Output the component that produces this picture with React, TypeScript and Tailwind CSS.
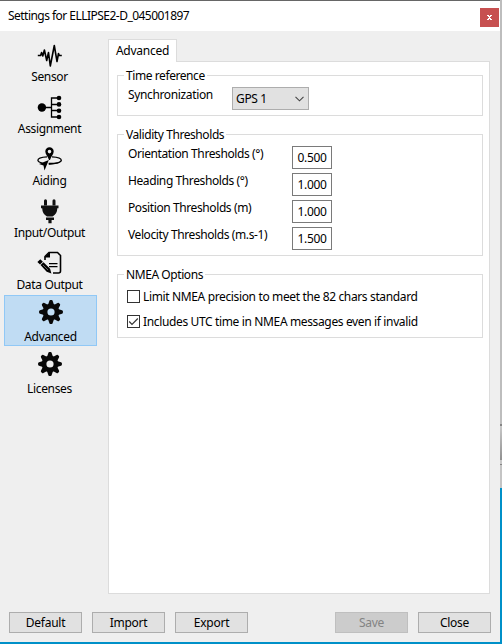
import type { ReactNode } from "react";

function SensorIcon() {
  return (
    <svg width="26" height="26" viewBox="0 0 26 26" fill="none" stroke="#000" strokeWidth="1.6" strokeLinejoin="round">
      <path d="M.8 12.500h2.800l1-3 1.200 3.500L7.400 7l2.300 10.500 1.800-8 1.800 13.500 4-20.500 2.700 16 1.500-8 .8 2h2.500" />
    </svg>
  );
}

function AssignmentIcon() {
  return (
    <svg width="26" height="26" viewBox="0 0 26 26" fill="#000">
      <circle cx="4.900" cy="12.500" r="4.200" />
      <path d="M5 12.500h9.500M22 3h-7.500v19H22M14.500 9.500H22M14.500 15.500H22" fill="none" stroke="#000" strokeWidth="1.300" />
      <circle cx="22" cy="3" r="2.300" />
      <circle cx="22" cy="9.400" r="2.300" />
      <circle cx="22" cy="15.700" r="2.300" />
      <circle cx="22" cy="22" r="2.300" />
    </svg>
  );
}

function AidingIcon() {
  return (
    <svg width="26" height="26" viewBox="0 0 26 26" fill="#000">
      <path d="M10 9.900C4.500 10.200.9 11.500.9 13.300c0 1.300 1.800 2.200 4.600 2.800M15 9.900c5.500.3 9.300 1.600 9.300 3.400 0 2-5.200 3.700-12.300 3.700" fill="none" stroke="#000" strokeWidth="1.300" />
      <path d="M24.500 13.300c0 2.300-5.200 4.300-13 4.200l.2-1.700c7 .2 12.300-.6 12.800-2.500z" />
      <path fillRule="evenodd" d="M12.500.3a4.200 4.200 0 0 1 4.200 4.200c0 2.500-2.600 5-3.700 8.500h-1C10.900 9.500 8.300 7 8.300 4.500A4.200 4.200 0 0 1 12.500.3zm0 2.500a1.800 1.800 0 1 0 0 3.600 1.800 1.800 0 0 0 0-3.600z" />
      <path d="M11.800 13 2 17l4.500 1.500 1 5z" />
    </svg>
  );
}

function PlugIcon() {
  return (
    <svg width="26" height="26" viewBox="0 0 26 26" fill="#111">
      <path d="M7 1.700a1.500 1.500 0 0 1 3 0V6.500H7zM15.500 1.700a1.500 1.500 0 0 1 3 0V6.500h-3z" />
      <path d="M4 6.500h17.500v2.800h-1.200c0 4-1.800 6.700-4.800 8.200H10c-3-1.500-4.800-4.200-4.800-8.200H4zM9 18.500h8v2.600h-2.400v3.200h-3.200v-3.200H9z" />
    </svg>
  );
}

function DataOutputIcon() {
  return (
    <svg width="26" height="26" viewBox="0 0 26 26">
      <path d="M8 9V5.500L12 1.500h8.500l3 3v15.500q0 2-2 2H16" fill="none" stroke="#000" strokeWidth="1.600" />
      <path d="m7.500 6.500 5.500-5.500v5.500z" />
      <path d="M12 12.600h8.500M12 15.600h8.500" stroke="#000" strokeWidth="1.200" />
      <path d="m.4 11 2.900-2.700 2.600 2.400-2.900 2.800zM3.500 14.100l3-2.900 6.600 6.500 1.300 4.800-4.700-1.800z" />
      <path d="m6 14 5 5" stroke="#efefef" strokeWidth=".4" />
    </svg>
  );
}

function GearIcon() {
  return (
    <svg width="26" height="26" viewBox="0 0 26 26" fill="#080808">
      {[0, 45, 90, 135, 180, 225, 270, 315].map((angle) => (
        <path key={angle} d="M10 6l1.300-4q.3-.9 1-.9h1.400q.7 0 1 .9L16 6z" transform={`rotate(${angle} 13 13)`} />
      ))}
      <path fillRule="evenodd" d="M13 4.700a8.300 8.300 0 1 0 0 16.600 8.300 8.300 0 0 0 0-16.600zm0 4.700a3.600 3.600 0 1 1 0 7.200 3.600 3.600 0 0 1 0-7.200z" />
    </svg>
  );
}

const items = [
  { label: "Sensor", icon: <SensorIcon />, offset: "pt-[7px]" },
  { label: "Assignment", icon: <AssignmentIcon />, offset: "pt-[7px]" },
  { label: "Aiding", icon: <AidingIcon />, offset: "pt-[7px]" },
  { label: "Input/Output", icon: <PlugIcon />, offset: "pt-[7px]" },
  { label: "Data Output", icon: <DataOutputIcon />, offset: "pt-[7px]" },
  { label: "Advanced", icon: <GearIcon />, offset: "pt-[3px]", selected: true },
  { label: "Licenses", icon: <GearIcon />, offset: "pt-[3px]" },
];

const thresholds = [
  { label: "Orientation Thresholds (°)", value: "0.500" },
  { label: "Heading Thresholds (°)", value: "1.000" },
  { label: "Position Thresholds (m)", value: "1.000" },
  { label: "Velocity Thresholds (m.s-1)", value: "1.500" },
];

function Group({ title, className, children }: { title: string; className: string; children: ReactNode }) {
  return (
    <fieldset className={`w-[366px] border border-[#dcdcdc] ${className}`}>
      <legend className="ml-[6px] h-[15px] px-[2px] leading-[16px] tracking-[-0.42px]">{title}</legend>
      {children}
    </fieldset>
  );
}

function Check({ checked, children }: { checked?: boolean; children: ReactNode }) {
  return (
    <div className="flex h-[25px] items-center gap-[3px] pl-[9px]">
      <span className="flex h-[13px] w-[13px] items-center justify-center border border-[#333]">
        {checked && (
          <svg width="11" height="11" viewBox="0 0 11 11" fill="none" stroke="#333" strokeWidth="1.200">
            <path d="m1.200 5.500 2.800 2.800 5.800-5.800" />
          </svg>
        )}
      </span>
      <span>{children}</span>
    </div>
  );
}

function Button({ children, disabled }: { children: ReactNode; disabled?: boolean }) {
  return (
    <button
      disabled={disabled}
      className={`h-[21px] w-[73px] border text-center leading-[19px] tracking-[-0.25px] ${
        disabled ? "border-[#bfbfbf] bg-[#cccccc] text-[#838383]" : "border-[#adadad] bg-[#e1e1e1]"
      }`}
    >
      {children}
    </button>
  );
}

export default function App() {
  return (
    <div className="flex h-[644px] w-[502px] flex-col overflow-hidden bg-[#0090c8] font-['Noto_Sans','Open_Sans',sans-serif] text-[12px] leading-[16px] tracking-[-0.36px] whitespace-nowrap text-black">
      <div className="flex h-[642px]">
        <div className="flex w-[500px] flex-col border-t border-[#666] bg-[#efefef]">
          <header className="flex h-[30px] items-start justify-between bg-white pr-px pl-[8px]">
            <span className="pt-[7px] tracking-[-0.53px]">Settings for ELLIPSE2-D_045001897</span>
            <button className="mt-[7px] flex h-[19px] w-[19px] items-center justify-center bg-[#c75050]">
              <svg width="5" height="5" viewBox="0 0 5 5" fill="#fff" shapeRendering="crispEdges">
                <path d="M0 0h2v1H0zM3 0h2v1H3zM1 1h3v1H1zM2 2h1v1H2zM1 3h3v1H1zM0 4h2v1H0zM3 4h2v1H3z" />
              </svg>
            </button>
          </header>
          <div className="flex h-[563px]">
            <nav className="w-[108px] pt-[4px] pl-[4px]">
              {items.map((item) => (
                <div
                  key={item.label}
                  className={`mb-px flex h-[51px] w-[93px] flex-col items-center border ${
                    item.selected ? "border-[#90c8f6] bg-[#c0dcf3]" : "border-transparent pr-[2px]"
                  }`}
                >
                  <div className={`h-[33px] ${item.offset}`}>{item.icon}</div>
                  <span className="tracking-[-0.35px]">{item.label}</span>
                </div>
              ))}
            </nav>
            <main className="flex flex-col pt-[8px]">
              <div className="z-10 h-[23px] w-[69px] border border-b-0 border-[#dcdcdc] bg-white text-center leading-[21px] tracking-[-0.25px]">Advanced</div>
              <section className="-mt-px h-[533px] w-[382px] border border-[#dcdcdc] bg-white pt-[6px] pl-[8px]">
                <Group title="Time reference" className="h-[48px]">
                  <div className="flex pl-[10px]">
                    <span className="mt-[4px] w-[104px]">Synchronization</span>
                    <div className="mt-[4px] flex h-[23px] w-[77px] items-center justify-between border border-[#adadad] bg-[#e1e1e1] pr-[4px] pl-[3px]">
                      <span>GPS 1</span>
                      <svg width="9" height="6" viewBox="0 0 9 6" fill="none" stroke="#444" strokeWidth="1.100">
                        <path d="m.5.8 4 4 4-4" />
                      </svg>
                    </div>
                  </div>
                </Group>
                <Group title="Validity Thresholds" className="mt-[11px] h-[129px]">
                  <div className="flex flex-col gap-[4px] pt-[4px] pl-[10px]">
                    {thresholds.map((row) => (
                      <div key={row.label} className="flex h-[23px]">
                        <span className="w-[164px] tracking-[-0.4px]">{row.label}</span>
                        <span className="h-[23px] w-[40px] border border-[#7a7a7a] text-center leading-[21px]">{row.value}</span>
                      </div>
                    ))}
                  </div>
                </Group>
                <Group title="NMEA Options" className="mt-[11px] h-[71px]">
                  <div className="pt-[2px]">
                    <Check>Limit NMEA precision to meet the 82 chars standard</Check>
                    <Check checked>Includes UTC time in NMEA messages even if invalid</Check>
                  </div>
                </Group>
              </section>
            </main>
          </div>
          <footer className="flex gap-[10px] pt-[18px] pl-[9px]">
            <Button>Default</Button>
            <Button>Import</Button>
            <Button>Export</Button>
            <div className="w-[67px]" />
            <Button disabled>Save</Button>
            <Button>Close</Button>
          </footer>
        </div>
        <div className="flex w-[2px] flex-col">
          <div className="h-[424px] bg-[#bdbdbd]" />
          <div className="h-[2px] bg-[#858585]" />
          <div className="h-[34px] bg-gradient-to-b from-[#c8c8c8] to-[#909090]" />
          <div className="h-[4px] bg-[#c8c8c8]" />
          <div className="h-px bg-[#858585]" />
          <div className="h-[23px] bg-[#c4c4c4]" />
        </div>
      </div>
    </div>
  );
}
